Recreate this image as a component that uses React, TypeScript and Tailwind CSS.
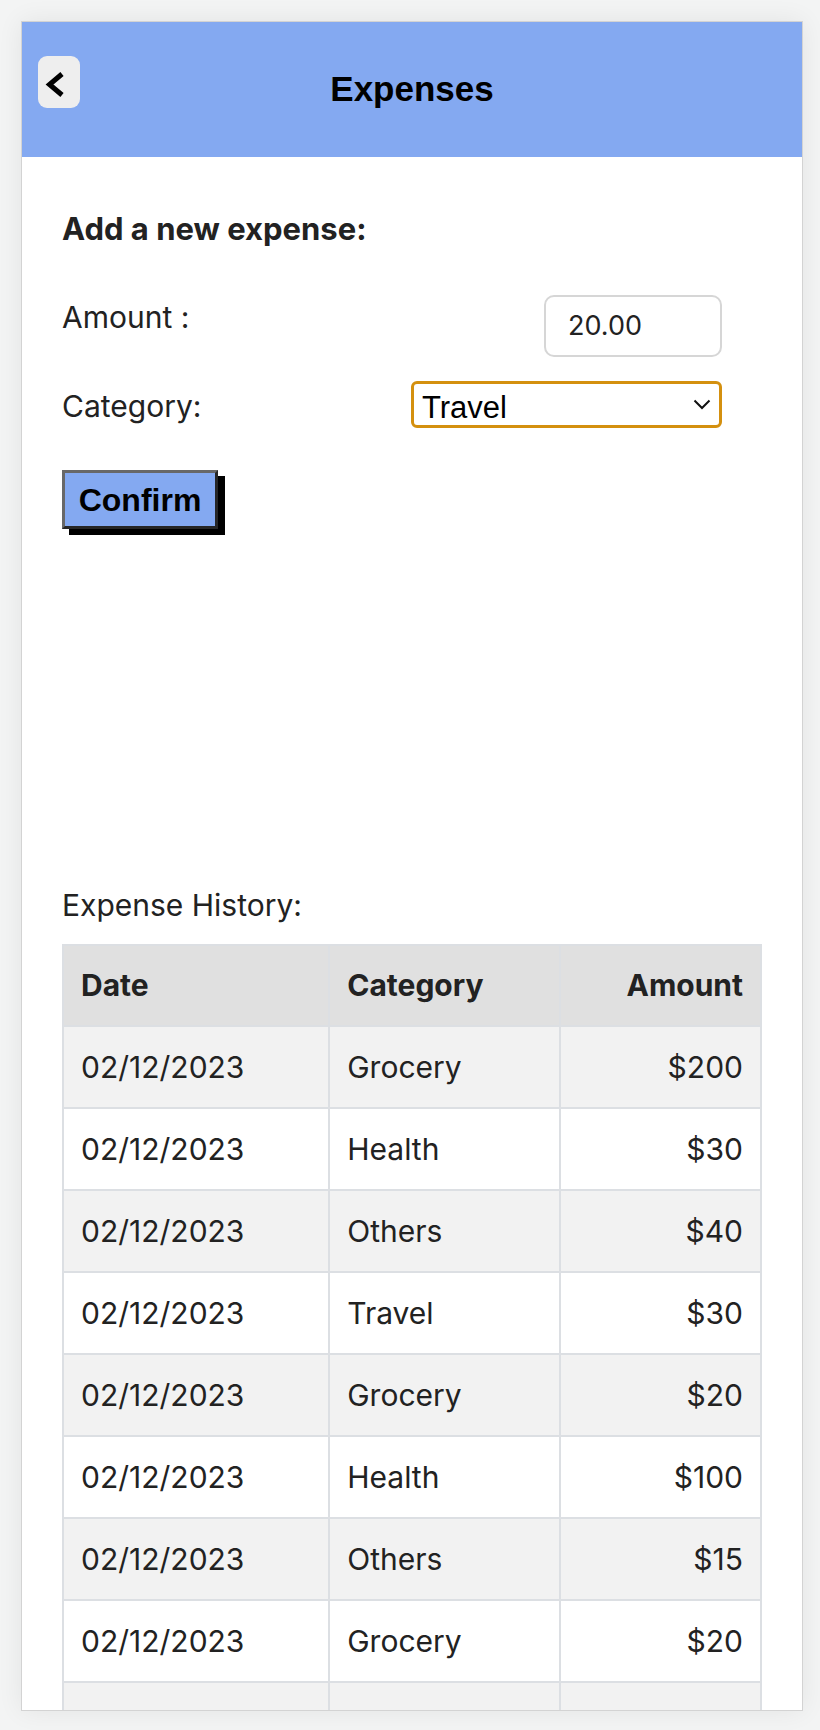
import React from "react";

const rows = [
  ["02/12/2023", "Grocery", "$200"],
  ["02/12/2023", "Health", "$30"],
  ["02/12/2023", "Others", "$40"],
  ["02/12/2023", "Travel", "$30"],
  ["02/12/2023", "Grocery", "$20"],
  ["02/12/2023", "Health", "$100"],
  ["02/12/2023", "Others", "$15"],
  ["02/12/2023", "Grocery", "$20"],
  ["", "", ""],
];

export default function App() {
  return (
    <div className="min-h-[1730px] bg-[#f3f4f4] pt-[21px] pl-[21px] font-['Inter',sans-serif] text-[#222]">
      <div className="w-[782px] h-[1690px] overflow-hidden border border-[#d3d3d3] bg-white shadow-[0_0_24px_rgba(0,0,0,0.07)]">
        <div className="relative h-[135px] bg-[#84a9f1] flex items-center justify-center pb-[2px]">
          <button className="absolute left-[16px] top-[34px] w-[42px] h-[52px] rounded-[9px] bg-[#eeeeee] flex items-center justify-start pl-[4px]">
            <svg width="24" height="32" viewBox="0 0 24 32">
              <polyline points="20,8 7.5,18.5 20,29" fill="none" stroke="#000" strokeWidth="5" strokeLinejoin="miter" />
            </svg>
          </button>
          <h1 className="font-['Liberation_Sans',Arial,sans-serif] font-bold text-[35px] leading-[40px] text-black">Expenses</h1>
        </div>
        <div className="px-[40px] pt-[50px]">
          <h2 className="text-[31px] leading-[44px] font-bold">Add a new expense:</h2>
          <div className="w-[660px] mt-[44px] flex justify-between items-start">
            <span className="text-[30px] leading-[45px]">Amount :</span>
            <div className="w-[178px] h-[62px] border-2 border-[#d6d6d6] rounded-[10px] pl-[22px] flex items-center text-[27px]">20.00</div>
          </div>
          <div className="w-[660px] mt-[24px] flex justify-between items-start">
            <span className="mt-[3px] text-[30px] leading-[45px]">Category:</span>
            <div className="w-[311px] h-[47px] border-[3px] border-[#d4900f] rounded-[6px] pl-[8px] pr-[8px] flex items-center justify-between font-['Liberation_Sans',Arial,sans-serif] text-[31px] text-black">
              <span className="mt-[7px] leading-[36px]">Travel</span>
              <svg width="18" height="11" viewBox="0 0 18 11">
                <polyline points="1.5,1.5 9,9 16.5,1.5" fill="none" stroke="#111" strokeWidth="2" />
              </svg>
            </div>
          </div>
          <button className="mt-[41px] w-[156px] h-[59px] bg-[#84a9f1] border-[3px] border-t-[#686868] border-l-[#686868] border-b-[#262626] border-r-[#262626] shadow-[7px_6px_0_#000] flex items-center justify-center font-['Liberation_Sans',Arial,sans-serif] font-bold text-[32px] text-black">
            Confirm
          </button>
          <p className="mt-[354px] text-[30px] leading-[45px]">Expense History:</p>
          <table className="mt-[16px] w-[700px] border-collapse text-[30px] leading-[45px]">
            <colgroup>
              <col className="w-[267px]" />
              <col className="w-[231px]" />
              <col className="w-[202px]" />
            </colgroup>
            <thead>
              <tr className="bg-[#e0e0e0]">
                <th className="border-2 border-[#dcdfe3] px-[17px] py-[17px] text-left font-bold">Date</th>
                <th className="border-2 border-[#dcdfe3] px-[17px] py-[17px] text-left font-bold">Category</th>
                <th className="border-2 border-[#dcdfe3] px-[17px] py-[17px] text-right font-bold">Amount</th>
              </tr>
            </thead>
            <tbody>
              {rows.map((r, i) => (
                <tr key={i} className={i % 2 === 0 ? "bg-[#f2f2f2]" : "bg-white"}>
                  <td className="border-2 border-[#dcdfe3] px-[17px] py-[17.5px] h-[82px] text-left">{r[0]}</td>
                  <td className="border-2 border-[#dcdfe3] px-[17px] py-[17.5px] h-[82px] text-left">{r[1]}</td>
                  <td className="border-2 border-[#dcdfe3] px-[17px] py-[17.5px] h-[82px] text-right">{r[2]}</td>
                </tr>
              ))}
            </tbody>
          </table>
        </div>
      </div>
    </div>
  );
}
